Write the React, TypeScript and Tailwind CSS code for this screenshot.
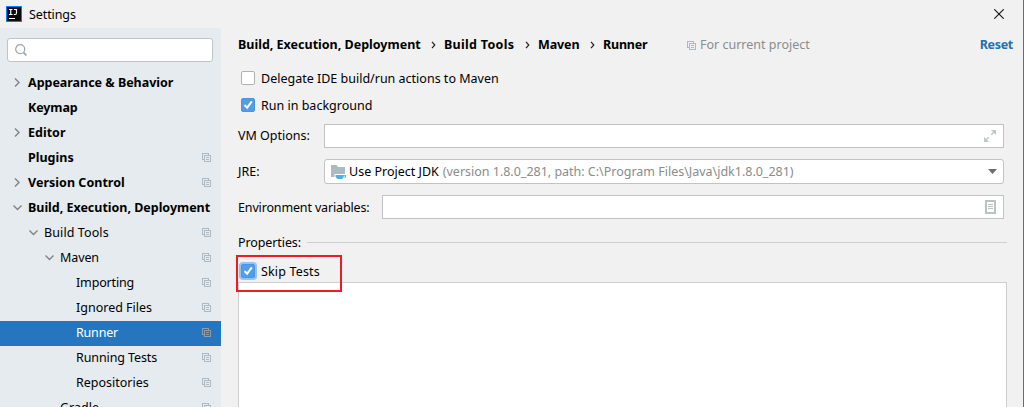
import React from "react";

function CopyIcon({ color = "#afb9c1" }: { color?: string }) {
  return (
    <svg width="9" height="9" viewBox="0 0 9 9" fill="none" stroke={color} shapeRendering="crispEdges" className="shrink-0">
      <path d="M2.5 6.5h-2v-6h6v2" />
      <path d="M2.5 2.5h6v6h-6z" />
      <path d="M4 4.5h3M4 6.5h3" />
    </svg>
  );
}

function Chevron({ open }: { open: boolean }) {
  return (
    <svg width="9" height="9" viewBox="0 0 9 9" fill="none" stroke="#7f8488" strokeWidth="1.4" className="shrink-0">
      <path d={open ? "M.5 2.500l4 4 4-4" : "M2 .5l4 4-4 4"} />
    </svg>
  );
}

type Row = {
  label: string;
  pad: string;
  text: string;
  arrow?: "open" | "closed";
  copy?: boolean;
  selected?: boolean;
};

const rows: Row[] = [
  { label: "Appearance & Behavior", pad: "pl-[13px]", text: "font-bold tracking-[-0.02px]", arrow: "closed" },
  { label: "Keymap", pad: "pl-[13px]", text: "font-bold tracking-[-0.1px]" },
  { label: "Editor", pad: "pl-[13px]", text: "font-bold", arrow: "closed" },
  { label: "Plugins", pad: "pl-[13px]", text: "font-bold", copy: true },
  { label: "Version Control", pad: "pl-[13px]", text: "font-bold tracking-[0.03px]", arrow: "closed", copy: true },
  { label: "Build, Execution, Deployment", pad: "pl-[13px]", text: "font-bold tracking-[-0.02px]", arrow: "open" },
  { label: "Build Tools", pad: "pl-[29px]", text: "tracking-[0.1px]", arrow: "open", copy: true },
  { label: "Maven", pad: "pl-[45px]", text: "tracking-[-0.1px]", arrow: "open", copy: true },
  { label: "Importing", pad: "pl-[61px]", text: "tracking-[-0.15px]", copy: true },
  { label: "Ignored Files", pad: "pl-[61px]", text: "tracking-normal", copy: true },
  { label: "Runner", pad: "pl-[61px]", text: "tracking-[-0.2px] text-white", copy: true, selected: true },
  { label: "Running Tests", pad: "pl-[61px]", text: "tracking-[-0.1px]", copy: true },
  { label: "Repositories", pad: "pl-[61px]", text: "tracking-normal", copy: true },
  { label: "Gradle", pad: "pl-[45px]", text: "tracking-normal", copy: true },
];

function TreeRow({ row }: { row: Row }) {
  return (
    <div className={`flex h-[25px] shrink-0 items-center pr-[10px] pb-[2px] ${row.pad} ${row.selected ? "bg-[#2675bf]" : ""}`}>
      <div className="flex w-[15px] shrink-0">{row.arrow && <Chevron open={row.arrow === "open"} />}</div>
      <span className={`flex-1 ${row.text}`}>{row.label}</span>
      {row.copy && <CopyIcon color={row.selected ? "#8b9cab" : "#afb9c1"} />}
    </div>
  );
}

function Checkbox({ checked, focused }: { checked?: boolean; focused?: boolean }) {
  return (
    <span
      className={`flex h-[14px] w-[14px] shrink-0 items-center justify-center rounded-[2px] border ${
        checked ? "border-[#4a95df] bg-[#4f9ee8]" : "border-[#b0b0b0] bg-white"
      } ${focused ? "ring-2 ring-[#97c3f3]" : ""}`}
    >
      {checked && (
        <svg width="12" height="12" viewBox="0 0 12 12" fill="none" stroke="#fff" strokeWidth="2" className="shrink-0">
          <path d="M2.5 6l2.6 2.8L9.8 2.3" />
        </svg>
      )}
    </span>
  );
}

function Separator() {
  return (
    <svg width="5" height="8" viewBox="0 0 5 8" fill="none" stroke="#222" strokeWidth="1.2" className="shrink-0">
      <path d="M1 .8L3.800 4 1 7.200" />
    </svg>
  );
}

export default function App() {
  return (
    <div className="flex h-[407px] w-[1024px] flex-col overflow-hidden border-r border-[#6b6b6b] bg-[#f1f1f1] font-['Noto_Sans','Open_Sans',sans-serif] text-[12.5px] leading-[18px] whitespace-nowrap text-black">
      <header className="flex h-7 shrink-0 items-center pr-[19px] pl-[6px]">
        <svg width="16" height="16" viewBox="0 0 16 16" className="shrink-0">
          <path fill="#087cfa" d="M0 0h16v16H0z" />
          <path fill="#0b0b0b" d="M1 1h14v14H1z" />
          <path stroke="#fff" strokeWidth="1.2" fill="none" d="M3 3.500h3.500M4.750 3.500v5M3 8.500h3.500M8 3.500h3M10.500 3v4q0 1.500-1.300 1.500H7.800M3 12.500h6" />
        </svg>
        <span className="ml-[7px] flex-1 pt-[2px] tracking-[-0.1px]">Settings</span>
        <svg width="10" height="10" viewBox="0 0 10 10" stroke="#111" strokeWidth="1.1" className="shrink-0">
          <path d="M.3.3l9.400 9.400M9.700.3L.3 9.700" />
        </svg>
      </header>

      <div className="flex min-h-0 flex-1">
        <aside className="flex w-[221px] shrink-0 flex-col overflow-hidden bg-[#e5ebef]">
          <div className="mt-[10px] mb-[9px] ml-[7px] flex h-6 w-[206px] shrink-0 items-center rounded-[3px] border border-[#c2c2c2] bg-white pl-[7px]">
            <svg width="12" height="12" viewBox="0 0 12 12" fill="none" stroke="#98a4ac" strokeWidth="1.2">
              <circle cx="5.200" cy="5.200" r="4.500" />
              <path strokeWidth="1.600" d="M8.400 8.400l3 3" />
            </svg>
          </div>
          {rows.map((row) => (
            <TreeRow key={row.label} row={row} />
          ))}
        </aside>

        <main className="flex min-w-0 flex-1 flex-col pl-[17px]">
          <nav className="mt-[8px] flex h-[18px] shrink-0 items-center pr-[10px] font-bold">
            <span className="w-[193px]">Build, Execution, Deployment</span>
            <Separator />
            <span className="ml-2 w-[81px] tracking-[0.3px]">Build Tools</span>
            <Separator />
            <span className="ml-2 w-[52px] tracking-[-0.1px]">Maven</span>
            <Separator />
            <span className="ml-2 w-[84px] tracking-[-0.2px]">Runner</span>
            <CopyIcon />
            <span className="ml-1 flex-1 font-normal text-[#8c8c8c]">For current project</span>
            <a className="tracking-[-0.3px] text-[#2470b3]">Reset</a>
          </nav>

          <label className="mt-[15px] ml-[3px] flex h-[18px] shrink-0 items-center gap-[6px]">
            <Checkbox />
            <span className="pt-[2px]">Delegate IDE build/run actions to Maven</span>
          </label>
          <label className="mt-[9px] ml-[3px] flex h-[18px] shrink-0 items-center gap-[6px]">
            <Checkbox checked />
            <span className="pt-[2px]">Run in background</span>
          </label>

          <div className="mt-[10px] mr-[19px] flex h-6 shrink-0 items-center">
            <span className="w-[86px]">VM Options:</span>
            <div className="flex h-6 flex-1 items-center justify-end border border-[#c2c2c2] bg-white pr-[7px]">
              <svg width="12" height="12" viewBox="0 0 12 12" fill="#c0c6ca" stroke="#c0c6ca">
                <path stroke="none" d="M7 0h5v5zM0 7v5h5z" />
                <path strokeWidth="1.500" d="M7.300 4.700L10 2M4.700 7.300L2 10" />
              </svg>
            </div>
          </div>

          <div className="mt-[11px] mr-[19px] flex h-[25px] shrink-0 items-center">
            <span className="w-[86px]">JRE:</span>
            <div className="flex h-[25px] flex-1 items-center rounded-[3px] border border-[#c2c2c2] bg-white pr-[6px] pl-[6px]">
              <svg width="16" height="14" viewBox="0 0 16 14" className="shrink-0">
                <path fill="#afb9c1" d="M0 0h5.500l1.500 2H14v7H3.500v3H0z" />
                <path fill="#40b6e0" fillRule="evenodd" d="M4.500 10H15v2.500h-2.500L11 14H6.500l-2-2zM12.500 10.800v1H14v-1z" />
              </svg>
              <span className="ml-[2px]">Use Project JDK</span>
              <span className="ml-1 flex-1 tracking-[-0.01px] text-[#8c8c8c]">(version 1.8.0_281, path: C:\Program Files\Java\jdk1.8.0_281)</span>
              <svg width="9" height="5" viewBox="0 0 9 5" fill="#6e6e6e">
                <path d="M0 0h9L4.500 5z" />
              </svg>
            </div>
          </div>

          <div className="mt-[11px] mr-[19px] flex h-6 shrink-0 items-center">
            <span className="w-[144px] pt-[2px] tracking-[-0.15px]">Environment variables:</span>
            <div className="flex h-6 flex-1 items-center justify-end border border-[#c2c2c2] bg-white pr-[7px]">
              <svg width="11" height="14" viewBox="0 0 11 14" fill="none" stroke="#bcc3c8" shapeRendering="crispEdges">
                <path strokeWidth="2" d="M1 1h9v12H1z" />
                <path d="M3 4.500h5M3 6.500h5M3 8.500h5" />
              </svg>
            </div>
          </div>

          <div className="mt-[14px] mr-4 flex h-[18px] shrink-0 items-center">
            <span className="w-[69px] pt-[2px] tracking-[-0.1px]">Properties:</span>
            <span className="h-px flex-1 bg-[#cfcfcf]" />
          </div>

          <div className="relative mt-[11px] ml-[3px] flex h-[18px] shrink-0 items-center gap-[6px]">
            <Checkbox checked focused />
            <span className="pt-[2px] tracking-[0.15px]">Skip Tests</span>
            <div className="absolute -top-[7px] -left-[5px] z-10 h-[37px] w-[106px] border-2 border-[#ed1c24]" />
          </div>
          <div className="mt-[2px] mr-4 flex-1 border border-b-0 border-[#cfcfcf] bg-white" />
        </main>
      </div>
    </div>
  );
}
